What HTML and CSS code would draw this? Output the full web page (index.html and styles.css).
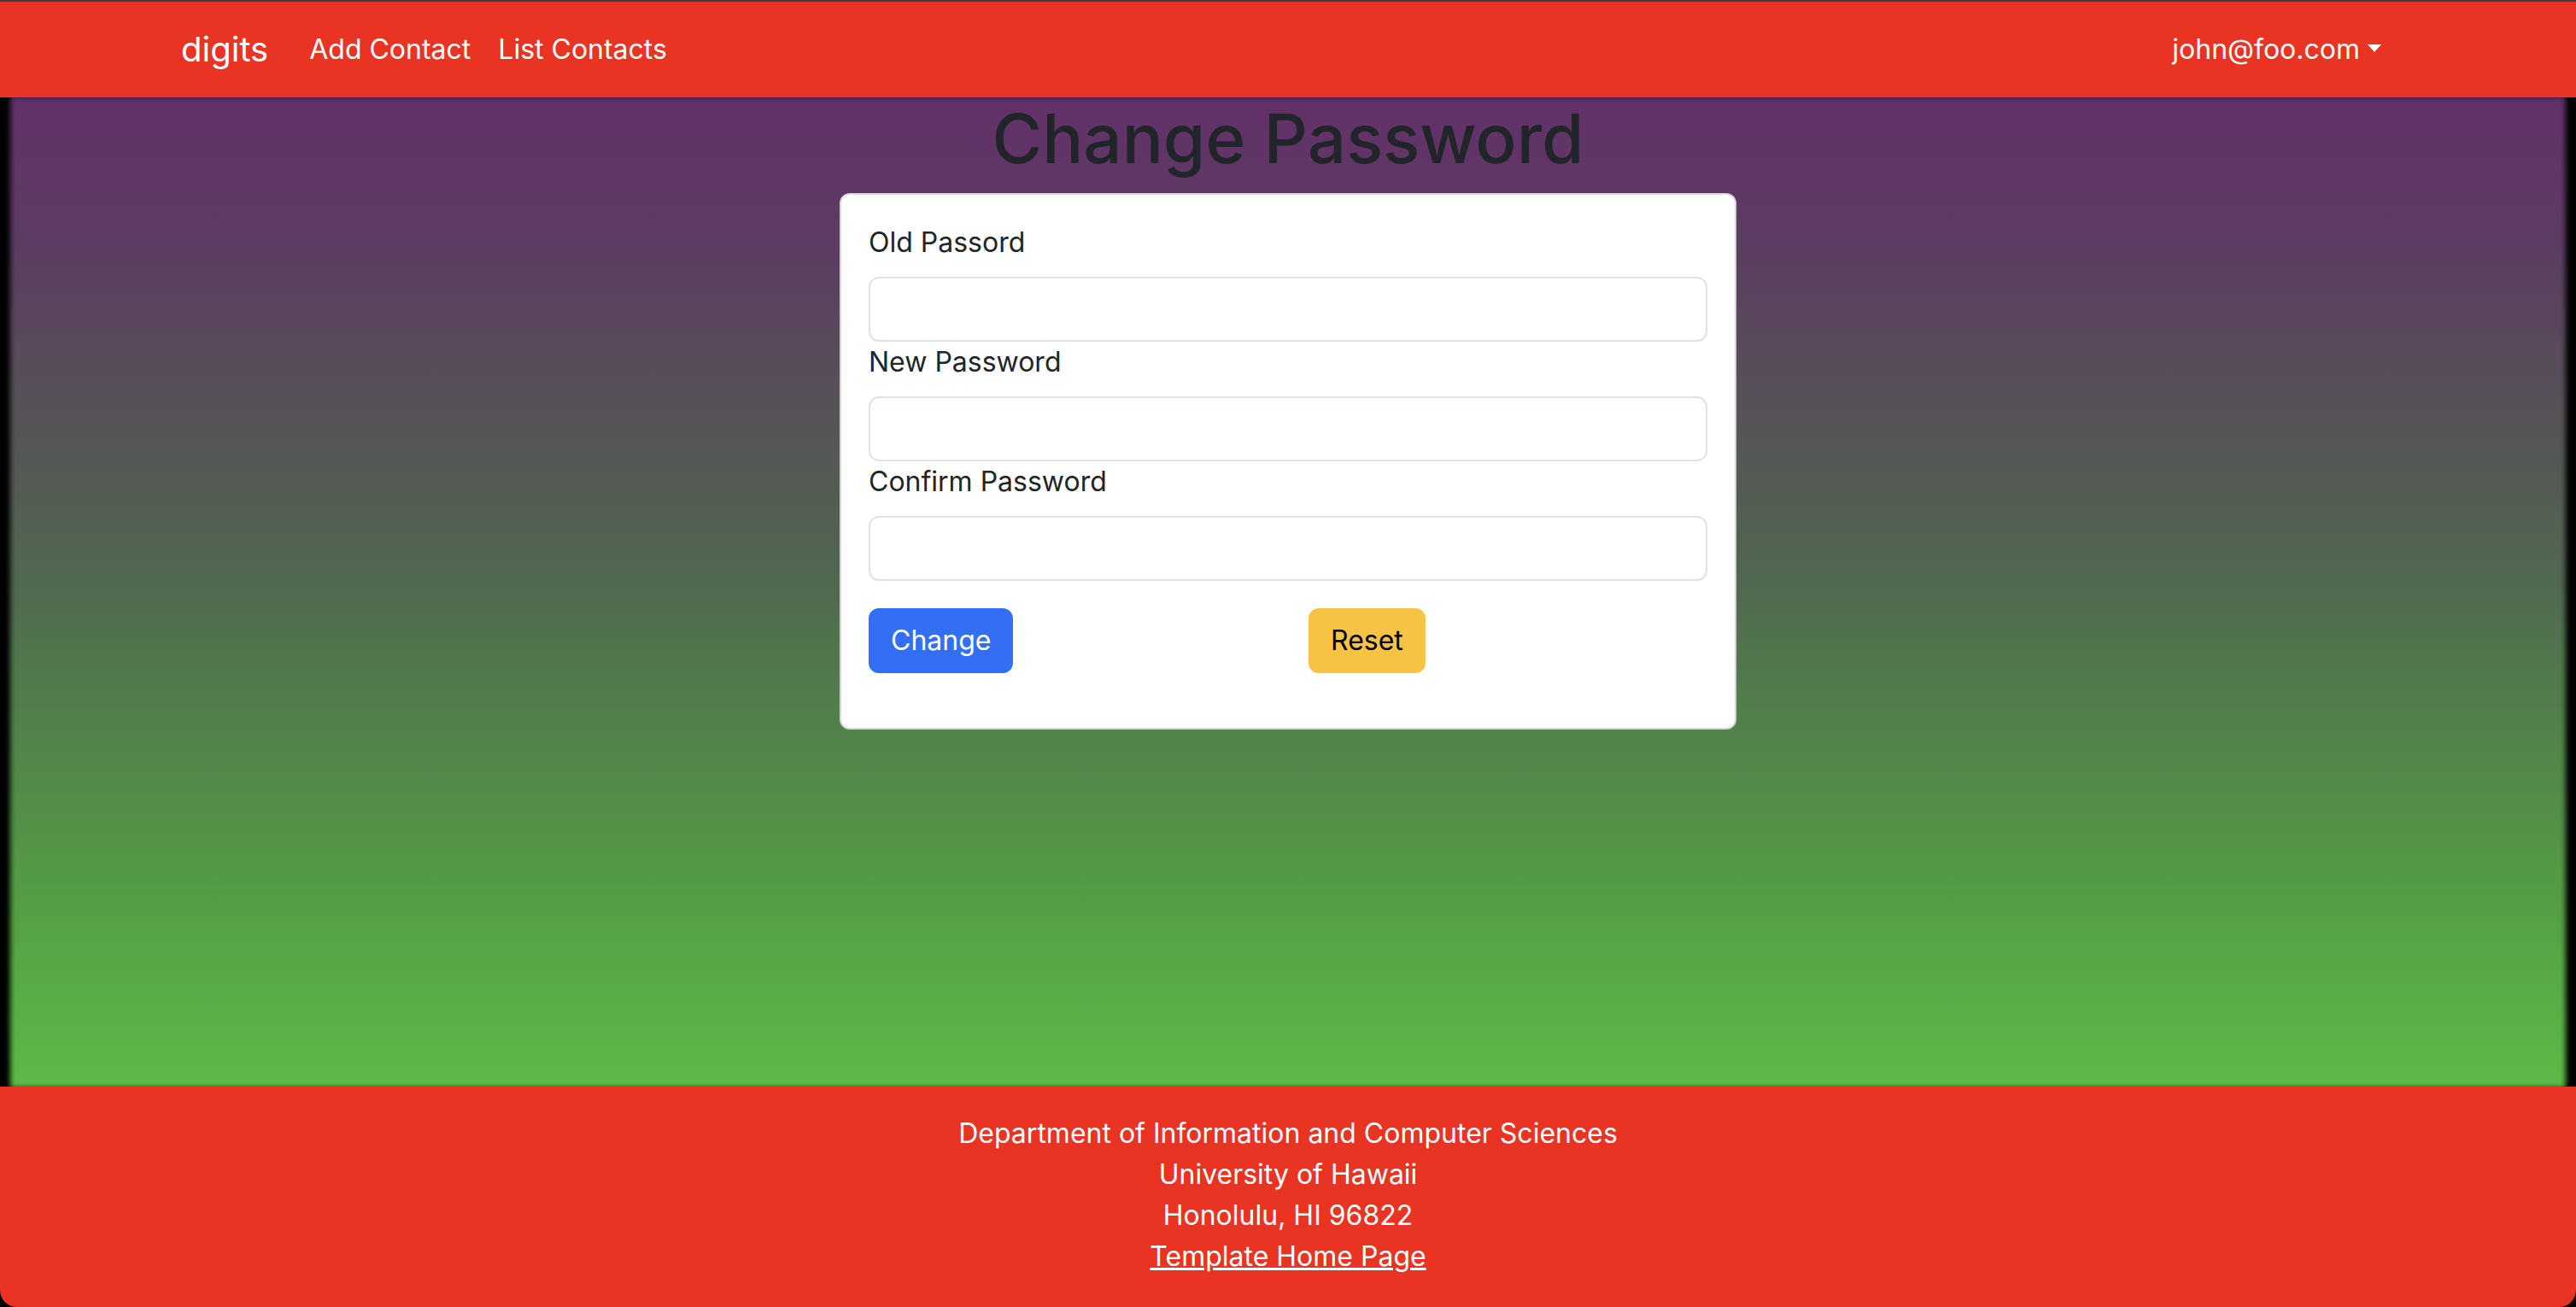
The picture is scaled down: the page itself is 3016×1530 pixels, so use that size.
FILE: index.html
```html
<!DOCTYPE html>
<html lang="en">
<head>
<meta charset="utf-8">
<title>Change Password</title>
<link rel="stylesheet" href="styles.css">
</head>
<body>
<div class="page">
  <nav class="navbar">
    <div class="container nav-inner">
      <div class="nav-left">
        <a class="brand" href="#">digits</a>
        <a class="nav-link" href="#">Add Contact</a>
        <a class="nav-link" href="#">List Contacts</a>
      </div>
      <a class="nav-link dropdown" href="#">john@foo.com<span class="caret"></span></a>
    </div>
  </nav>
  <main class="main">
    <h1 class="title">Change Password</h1>
    <form class="card">
      <label class="label">Old Passord</label>
      <input class="input" type="password">
      <label class="label">New Password</label>
      <input class="input" type="password">
      <label class="label">Confirm Password</label>
      <input class="input" type="password">
      <div class="actions">
        <div class="col"><button type="button" class="btn btn-primary">Change</button></div>
        <div class="col"><button type="button" class="btn btn-warning">Reset</button></div>
      </div>
    </form>
  </main>
  <footer class="footer">
    <div>Department of Information and Computer Sciences</div>
    <div>University of Hawaii</div>
    <div>Honolulu, HI 96822</div>
    <div><a href="#" class="footer-link">Template Home Page</a></div>
  </footer>
</div>
</body>
</html>
```

FILE: styles.css
```css
* { box-sizing: border-box; }
html, body {
  margin: 0;
  padding: 0;
  background: #000;
}
body {
  font-family: Inter, "Noto Sans", sans-serif;
  font-size: 32px;
  line-height: 1.5;
  color: #212529;
}
.page {
  height: 1530px;
  display: flex;
  flex-direction: column;
  border-top: 2px solid #3d3d3d;
}
.navbar {
  background: #e93323;
  padding: 16px 0;
  flex: none;
}
.container {
  width: 2640px;
  margin: 0 auto;
  padding: 0 24px;
}
.nav-inner {
  display: flex;
  align-items: center;
  justify-content: space-between;
}
.nav-left {
  display: flex;
  align-items: center;
}
.brand {
  color: #fff;
  text-decoration: none;
  font-size: 40px;
  line-height: 60px;
  padding: 10px 0;
  margin-right: 32px;
}
.nav-link {
  color: #fff;
  text-decoration: none;
  padding: 16px;
  line-height: 48px;
}
.dropdown {
  display: flex;
  align-items: center;
}
.caret {
  display: inline-block;
  margin-left: 9px;
  width: 0;
  height: 0;
  border-top: 9px solid #fff;
  border-left: 8.5px solid transparent;
  border-right: 8.5px solid transparent;
  margin-top: -4px;
}
.main {
  flex: 1;
  background: linear-gradient(#633069 0%, #5c3d62 15%, #555655 35%, #516a50 50%, #52844a 65%, #559f45 82%, #5cba46 100%);
  box-shadow: inset 15px 0 6px -3px #000, inset -15px 0 6px -3px #000;
  display: flex;
  flex-direction: column;
  align-items: center;
}
.title {
  margin: 0 0 16px;
  font-size: 80px;
  font-weight: 500;
  line-height: 1.2;
  color: #212529;
}
.card {
  width: 1050px;
  background: #fff;
  border: 2px solid #d9d9dc;
  border-radius: 12px;
  padding: 32px;
  display: flex;
  flex-direction: column;
}
.label {
  display: block;
  margin-bottom: 16px;
}
.input {
  display: block;
  width: 100%;
  height: 76px;
  border: 2px solid #dee2e6;
  border-radius: 12px;
  background: #fff;
  font: inherit;
  padding: 12px 24px;
}
.actions {
  display: grid;
  grid-template-columns: 1fr 1fr;
  column-gap: 48px;
  margin-top: 32px;
  margin-bottom: 32px;
}
.btn {
  font: inherit;
  line-height: 48px;
  padding: 12px 24px;
  border: 2px solid transparent;
  border-radius: 12px;
  cursor: pointer;
}
.btn-primary {
  background: #336ff5;
  border-color: #336ff5;
  color: #fff;
}
.btn-warning {
  background: #f6c344;
  border-color: #f6c344;
  color: #000;
}
.footer {
  flex: none;
  background: #e93323;
  color: #fff;
  text-align: center;
  padding: 31px 0 35px;
  border-radius: 0 0 20px 20px;
}
.footer-link {
  color: #fff;
  text-decoration: underline;
}
```
